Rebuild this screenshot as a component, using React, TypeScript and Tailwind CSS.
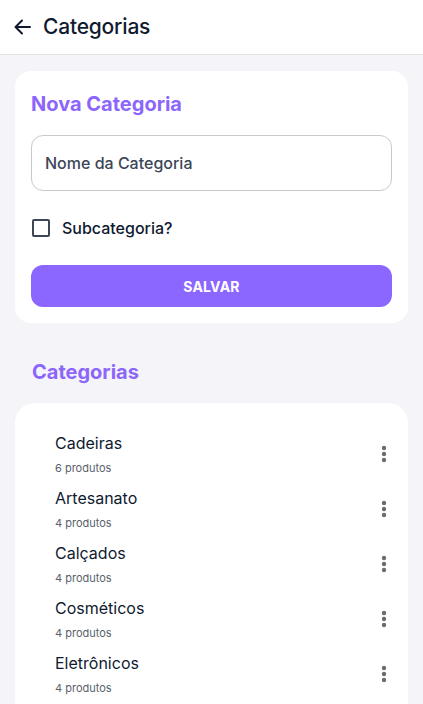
import { useState } from "react"

const categorias = [
    { nome: "Cadeiras", produtos: 6 },
    { nome: "Artesanato", produtos: 4 },
    { nome: "Calçados", produtos: 4 },
    { nome: "Cosméticos", produtos: 4 },
    { nome: "Eletrônicos", produtos: 4 },
]

const Kebab = () => (
    <svg width="6" height="18" viewBox="0 0 6 18" fill="#6b6b70">
        <circle cx="3" cy="3" r="2.2" />
        <circle cx="3" cy="9" r="2.2" />
        <circle cx="3" cy="15" r="2.2" />
    </svg>
)

export default function App() {
    const [sub, setSub] = useState(false)

    return (
        <div className="w-[423px] h-[704px] overflow-hidden bg-[#f5f4f9] font-['Inter',sans-serif]">
            <header className="h-[55px] bg-white border-b border-[#e0e0e3] flex items-center pl-[14px] gap-[11px]">
                <svg width="18" height="18" viewBox="0 0 18 18" fill="none" stroke="#0f1a30" strokeWidth="2" strokeLinecap="round" strokeLinejoin="round">
                    <path d="M16 9H2M8 2.5 1.5 9 8 15.5" />
                </svg>
                <h1 className="text-[21px] font-medium text-[#0f1a30] tracking-[-0.2px]">Categorias</h1>
            </header>

            <section className="mx-[15px] mt-[16px] bg-white rounded-[16px] px-[16px] pt-[20px] pb-[16px]">
                <h2 className="text-[20px] font-bold text-[#8c66fb] leading-[26px]">Nova Categoria</h2>

                <input
                    placeholder="Nome da Categoria"
                    className="mt-[18px] w-full h-[56px] border border-[#c9c9cc] rounded-[12px] px-[13px] text-[16px] font-medium text-[#3d4657] placeholder:text-[#3d4657] outline-none"
                />

                <label className="mt-[25px] h-[24px] flex items-center gap-[12px] cursor-pointer">
                    <span
                        onClick={() => setSub(!sub)}
                        className="w-[18px] h-[18px] border-2 border-[#3d4657] rounded-[2px] ml-[1px]"
                    />
                    <span className="text-[16px] font-medium text-[#0f1a30] leading-[24px]">Subcategoria?</span>
                </label>

                <button className="mt-[25px] w-full h-[42px] rounded-[12px] bg-[#8b66ff] text-white text-[14px] font-bold tracking-[0.2px]">
                    SALVAR
                </button>
            </section>

            <h2 className="mt-[36px] ml-[32px] text-[20px] font-bold text-[#8c66fb] leading-[26px]">Categorias</h2>

            <section className="mx-[15px] mt-[18px] bg-white rounded-t-[20px] pt-[23px] pl-[40px] pr-[21px] pb-[20px]">
                {categorias.map((c) => (
                    <div key={c.nome} className="h-[55px] flex items-center justify-between">
                        <div className="flex flex-col">
                            <span className="text-[16px] text-[#0f1a30] leading-[20px]">{c.nome}</span>
                            <span className="text-[11px] text-[#5a5f6b] leading-[14px] mt-[8px]">{c.produtos} produtos</span>
                        </div>
                        <Kebab />
                    </div>
                ))}
            </section>
        </div>
    )
}
